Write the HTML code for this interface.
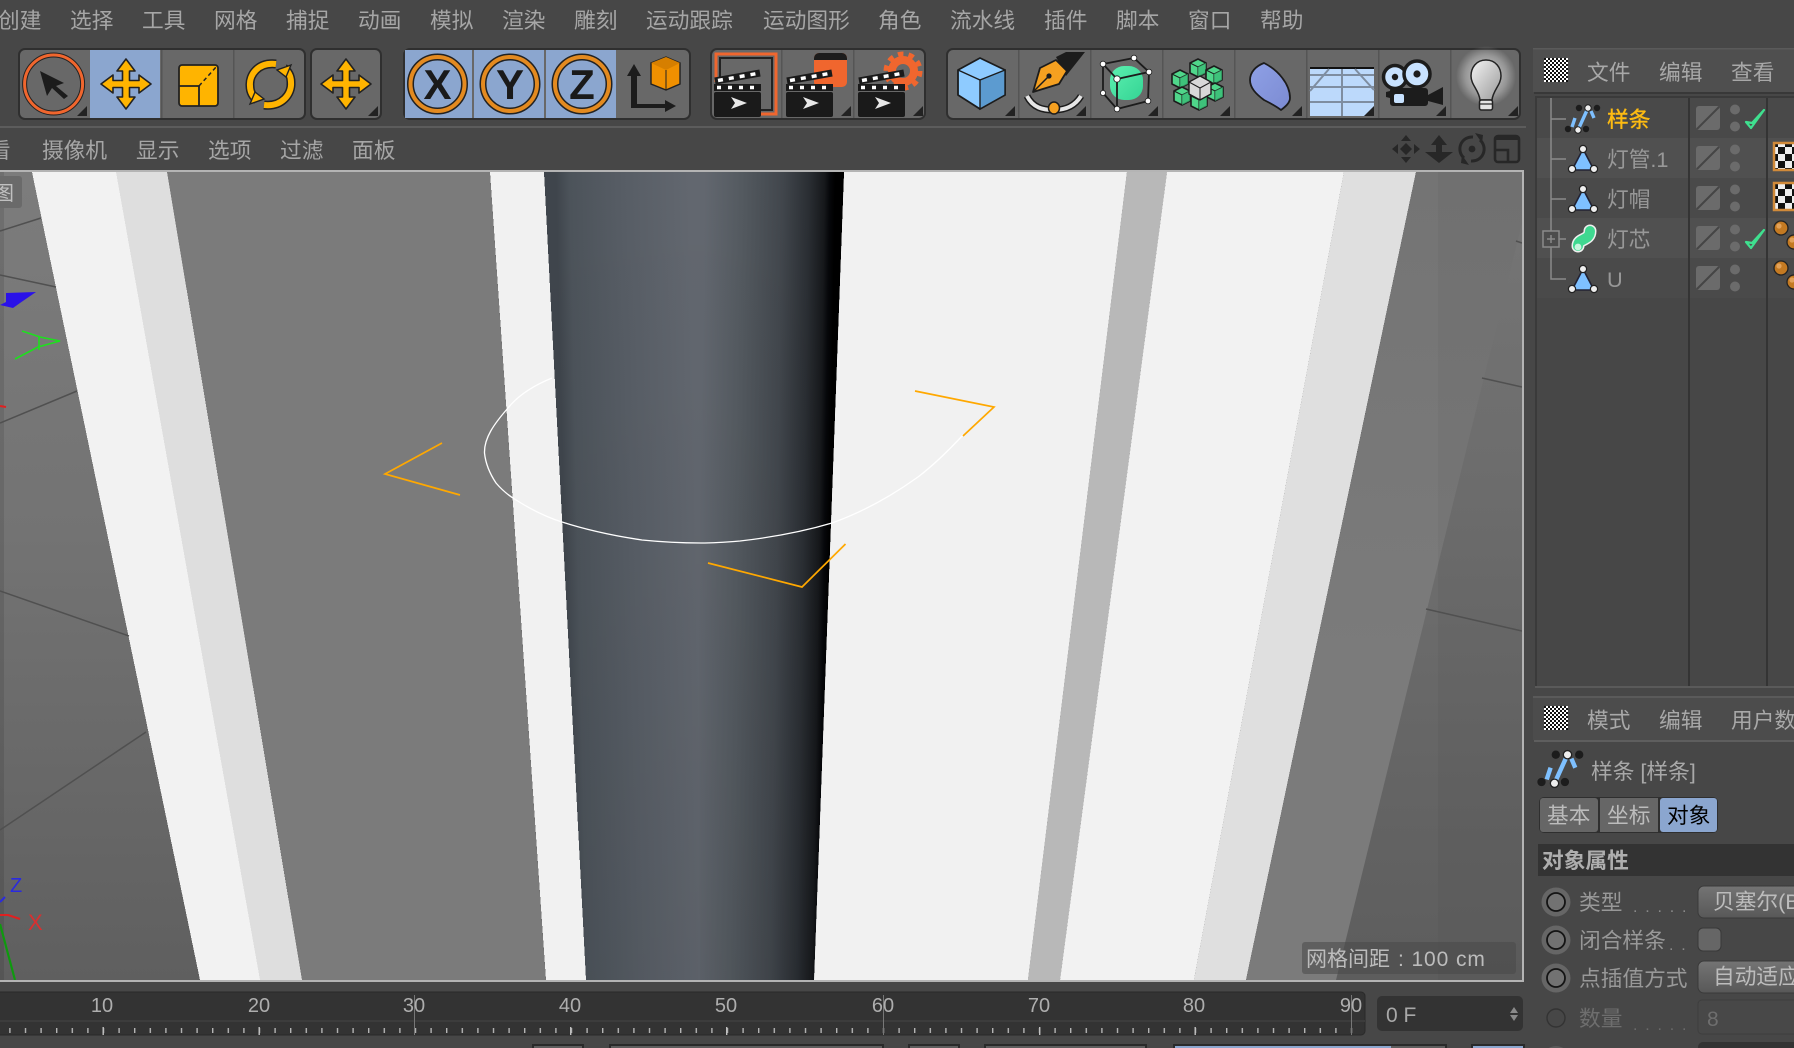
<!DOCTYPE html>
<html lang="zh">
<head>
<meta charset="utf-8">
<title>Cinema 4D</title>
<style>
html,body{margin:0;padding:0;background:#474747;width:1794px;height:1048px;overflow:hidden}
svg{display:block}
text{font-family:"Liberation Sans","Noto Sans CJK SC",sans-serif}
.m{font-size:21.7px;fill:#a6a6a6}
.n{font-size:20px;fill:#aeaeae;text-anchor:middle}
.o{font-size:21.7px;fill:#989898}
.p{font-size:21.7px;fill:#a8a8a8}
.xyz{font-size:42px;font-weight:bold;fill:#1a1a1a;text-anchor:middle}
</style>
</head>
<body>
<svg width="1794" height="1048" viewBox="0 0 1794 1048" xmlns="http://www.w3.org/2000/svg">
<defs>
  <clipPath id="vp"><rect x="0" y="172" width="1522" height="808"/></clipPath>
  <clipPath id="rp"><rect x="1533" y="0" width="261" height="1048"/></clipPath>
  <linearGradient id="bgL" x1="0" y1="172" x2="0" y2="980" gradientUnits="userSpaceOnUse">
    <stop offset="0" stop-color="#7c7c7c"/><stop offset=".45" stop-color="#737373"/><stop offset="1" stop-color="#5f5f5f"/>
  </linearGradient>
  <linearGradient id="bgM" x1="0" y1="172" x2="0" y2="980" gradientUnits="userSpaceOnUse">
    <stop offset="0" stop-color="#747474"/><stop offset=".6" stop-color="#7b7b7b"/><stop offset="1" stop-color="#7b7b7b"/>
  </linearGradient>
  <linearGradient id="bgR" x1="0" y1="172" x2="0" y2="980" gradientUnits="userSpaceOnUse">
    <stop offset="0" stop-color="#7a7a7a"/><stop offset=".4" stop-color="#707070"/><stop offset=".7" stop-color="#666"/><stop offset="1" stop-color="#5d5d5d"/>
  </linearGradient>
  <linearGradient id="tl" x1="565" y1="576" x2="698.5" y2="573" gradientUnits="userSpaceOnUse">
    <stop offset="0" stop-color="#3f454c"/><stop offset=".1" stop-color="#4c535a"/><stop offset=".5" stop-color="#575d65"/><stop offset="1" stop-color="#62676f"/>
  </linearGradient>
  <linearGradient id="tr" x1="698.5" y1="576" x2="829" y2="578" gradientUnits="userSpaceOnUse">
    <stop offset="0" stop-color="#62676f"/><stop offset=".3" stop-color="#53595f"/><stop offset=".6" stop-color="#41464c"/><stop offset=".8" stop-color="#2a2e33"/><stop offset=".92" stop-color="#16181b"/><stop offset=".96" stop-color="#06070a"/><stop offset="1" stop-color="#000"/>
  </linearGradient>
  <linearGradient id="fade" x1="0" y1="172" x2="0" y2="980" gradientUnits="userSpaceOnUse">
    <stop offset="0" stop-color="#000" stop-opacity="0"/><stop offset="1" stop-color="#000" stop-opacity=".05"/>
  </linearGradient>
  <linearGradient id="dd" x1="0" y1="0" x2="0" y2="1">
    <stop offset="0" stop-color="#747474"/><stop offset="1" stop-color="#585858"/>
  </linearGradient>
  <radialGradient id="glow"><stop offset="0" stop-color="#fff" stop-opacity=".75"/><stop offset=".7" stop-color="#fff" stop-opacity=".3"/><stop offset="1" stop-color="#fff" stop-opacity="0"/></radialGradient>
  <linearGradient id="bulb" x1="0" y1="0" x2="1" y2="1"><stop offset="0" stop-color="#f4f4f4"/><stop offset="1" stop-color="#999"/></linearGradient>
  <linearGradient id="blob" x1="0" y1="0" x2="1" y2="1"><stop offset="0" stop-color="#5cf0b0"/><stop offset="1" stop-color="#34d494"/></linearGradient>
  <linearGradient id="bend" x1="0" y1="0" x2="1" y2="1"><stop offset="0" stop-color="#8ea0e6"/><stop offset="1" stop-color="#7c8bd2"/></linearGradient>
  <pattern id="dith" width="4" height="4" patternUnits="userSpaceOnUse"><rect width="4" height="4" fill="#111"/><rect width="2" height="2" fill="#fff"/><rect x="2" y="2" width="2" height="2" fill="#fff"/></pattern>
  <pattern id="tick" x="9.2" y="0" width="15.6" height="60" patternUnits="userSpaceOnUse"><rect width="1.4" height="60" fill="#b4b4b4"/></pattern>
  <pattern id="chk" width="14" height="14" patternUnits="userSpaceOnUse"><rect width="14" height="14" fill="#eee"/><rect x="7" width="7" height="7" fill="#111"/><rect y="7" width="7" height="7" fill="#111"/></pattern>
  <path id="mv" d="M0,-25 L9,-13 L3.5,-13 L3.5,-3.5 L13,-3.5 L13,-9 L25,0 L13,9 L13,3.5 L3.5,3.5 L3.5,13 L9,13 L0,25 L-9,13 L-3.5,13 L-3.5,3.5 L-13,3.5 L-13,9 L-25,0 L-13,-9 L-13,-3.5 L-3.5,-3.5 L-3.5,-13 L-9,-13 Z" fill="#ffb400" stroke="#222" stroke-width="1.6" stroke-linejoin="round"/>
  <g id="clap">
    <rect x="0" y="30" width="47" height="25" rx="2" fill="#1a1a1a"/>
    <rect x="0" y="22" width="47" height="7" fill="#1a1a1a"/>
    <line x1="3" y1="25.5" x2="46" y2="25.5" stroke="#fff" stroke-width="3.5" stroke-dasharray="4 7"/>
    <line x1="1" y1="19" x2="46" y2="11" stroke="#1a1a1a" stroke-width="7"/>
    <line x1="4" y1="18.5" x2="46" y2="11" stroke="#fff" stroke-width="3.5" stroke-dasharray="5 6"/>
    <path d="M17,35 L33,41 L17,47 L21,41 Z" fill="#e8e8e8"/>
  </g>
  <path id="cor" d="M0,0 L-10,0 L0,-10 Z" fill="#222"/>
  <g id="triI">
    <path d="M0,-18 L-11,3 L11,3 Z" transform="translate(0,8)" fill="#7ec0ff" stroke="#223" stroke-width="1.6" stroke-linejoin="round"/>
    <g fill="#eee" stroke="#222" stroke-width="1.2"><circle cx="0" cy="-10" r="3.6"/><circle cx="-11" cy="10" r="3.6"/><circle cx="11" cy="10" r="3.6"/></g>
  </g>
  <g id="splI">
    <g stroke="#7ec0ff" stroke-width="3.4"><line x1="-8" y1="-1" x2="-11" y2="8"/><line x1="-5" y1="11" x2="5" y2="-11"/><line x1="8" y1="-8" x2="11" y2="-1"/></g>
    <g fill="#1c1c1c"><circle cx="-4" cy="-11" r="3.2"/><circle cx="14" cy="-11" r="3.2"/><circle cx="-15" cy="10" r="3.2"/><circle cx="3" cy="10" r="3.2"/></g>
    <g fill="#eee" stroke="#222" stroke-width="1"><circle cx="5" cy="-11" r="3.2"/><circle cx="-5" cy="11" r="3.2"/></g>
  </g>
  <g id="rowc">
    <rect x="0" y="-12" width="24" height="24" rx="3" fill="#6b6b6b"/>
    <line x1="1" y1="11" x2="23" y2="-11" stroke="#454545" stroke-width="2"/>
    <circle cx="39" cy="-8.5" r="5" fill="#6b6b6b"/><circle cx="39" cy="8.5" r="5" fill="#6b6b6b"/>
  </g>
  <path id="chkm" d="M0,3 L5,9 L18,-9 L6,4 Z" fill="none" stroke="#3fe08f" stroke-width="2.2" stroke-linejoin="round"/>
  <g id="radio"><circle r="14.5" fill="#666"/><circle r="9" fill="#727272" stroke="#141414" stroke-width="1.8"/></g>
  <g id="cube">
    <path d="M0,-9 L8,-5 L8,5 L0,9 L-8,5 L-8,-5 Z" fill="#4fd68a" stroke="#1c1c1c" stroke-width="1.6" stroke-linejoin="round"/>
    <path d="M-8,-5 L0,-1 L8,-5 M0,-1 V9" fill="none" stroke="#1c1c1c" stroke-width="1"/>
    <path d="M0,-1 L8,-5 L8,5 L0,9 Z" fill="#37b873" opacity=".7"/>
  </g>
  <g id="ball"><circle cx="0" cy="0" r="7" fill="#c47a22" stroke="#222" stroke-width="1.3"/><circle cx="-2" cy="-2" r="2.6" fill="#e2a25a"/></g>
</defs>

<rect width="1794" height="1048" fill="#474747"/>

<!-- menu -->
<text class="m" x="-2" y="28">创建</text><text class="m" x="70" y="28">选择</text><text class="m" x="142" y="28">工具</text><text class="m" x="214" y="28">网格</text><text class="m" x="286" y="28">捕捉</text><text class="m" x="358" y="28">动画</text><text class="m" x="430" y="28">模拟</text><text class="m" x="502" y="28">渲染</text><text class="m" x="574" y="28">雕刻</text><text class="m" x="646" y="28">运动跟踪</text><text class="m" x="763" y="28">运动图形</text><text class="m" x="878" y="28">角色</text><text class="m" x="950" y="28">流水线</text><text class="m" x="1044" y="28">插件</text><text class="m" x="1116" y="28">脚本</text><text class="m" x="1188" y="28">窗口</text><text class="m" x="1260" y="28">帮助</text>

<!-- toolbar groups -->
<g fill="#686868" stroke="#2f2f2f" stroke-width="2">
  <rect x="19" y="49" width="286" height="70" rx="6"/>
  <rect x="311" y="49" width="70" height="70" rx="6"/>
  <rect x="404" y="49" width="286" height="70" rx="6"/>
  <rect x="711" y="49" width="214" height="70" rx="6"/>
  <rect x="947" y="49" width="573" height="70" rx="6"/>
</g>
<rect x="90" y="50" width="70" height="68" fill="#8ba6cf"/>
<rect x="405" y="50" width="67" height="68" fill="#8ba6cf"/>
<rect x="474" y="50" width="70" height="68" fill="#8ba6cf"/>
<rect x="546" y="50" width="70" height="68" fill="#8ba6cf"/>
<g fill="#555">
  <rect x="161" y="50" width="1.5" height="68"/><rect x="233" y="50" width="1.5" height="68"/>
  <rect x="781" y="50" width="1.5" height="68"/><rect x="853" y="50" width="1.5" height="68"/>
  <rect x="1018" y="50" width="1.5" height="68"/><rect x="1090" y="50" width="1.5" height="68"/><rect x="1162" y="50" width="1.5" height="68"/><rect x="1234" y="50" width="1.5" height="68"/><rect x="1306" y="50" width="1.5" height="68"/><rect x="1378" y="50" width="1.5" height="68"/><rect x="1450" y="50" width="1.5" height="68"/>
</g>

<!-- select -->
<circle cx="53.6" cy="84" r="29" fill="none" stroke="#222" stroke-width="5"/>
<circle cx="53.6" cy="84" r="29" fill="none" stroke="#f0662e" stroke-width="3"/>
<path d="M40,71 L64,83 L56,86 L68,96 L64,99 L52,88 L47,96 Z" fill="#1c1c1c"/>
<use href="#mv" x="126" y="84"/>
<!-- scale -->
<rect x="179" y="65" width="39" height="41" rx="3" fill="#ffb400" stroke="#222" stroke-width="1.8"/>
<path d="M179,86 H199 V106" fill="none" stroke="#222" stroke-width="1.8"/>
<path d="M199,86 L217,66" stroke="#222" stroke-width="1.5" stroke-dasharray="4 3"/>
<!-- rotate -->
<g fill="none" stroke-linecap="butt">
  <path d="M276,64 C258,62 249,75 250,86 C250,92 253,97 257,100" stroke="#222" stroke-width="9"/>
  <path d="M264,105 C282,107 292,94 291,82 C291,76 288,71 284,68" stroke="#222" stroke-width="9"/>
  <path d="M276,64 C258,62 249,75 250,86 C250,92 253,97 257,100" stroke="#ffb400" stroke-width="6"/>
  <path d="M264,105 C282,107 292,94 291,82 C291,76 288,71 284,68" stroke="#ffb400" stroke-width="6"/>
</g>
<path d="M250,104 L264,99 L255,92 Z M291,65 L277,70 L286,77 Z" fill="#ffb400" stroke="#222" stroke-width="1.4"/>
<use href="#mv" x="346" y="84"/>
<use href="#cor" x="87" y="116"/><use href="#cor" x="378" y="116"/>

<!-- XYZ -->
<g fill="none">
  <g stroke="#222" stroke-width="7"><circle cx="437.5" cy="84" r="27"/><circle cx="510" cy="84" r="27"/><circle cx="582" cy="84" r="27"/></g>
  <g stroke="#e38a20" stroke-width="4"><circle cx="437.5" cy="84" r="27"/><circle cx="510" cy="84" r="27"/><circle cx="582" cy="84" r="27"/></g>
</g>
<text class="xyz" x="437.5" y="99">X</text><text class="xyz" x="510" y="99">Y</text><text class="xyz" x="582" y="99">Z</text>
<!-- axis -->
<path d="M634,64 L641,76 L637,76 L637,104 L665,104 L665,100 L676,106 L665,112 L665,108 L631,108 L631,76 L627,76 Z" fill="#1c1c1c"/>
<path d="M666,57 L680,63 L680,84 L666,90 L651,84 L651,63 Z" fill="#f09000" stroke="#222" stroke-width="1.4"/>
<path d="M651,63 L666,57 L680,63 L666,70 Z" fill="#d67f00"/>
<path d="M666,70 V90" stroke="#222" stroke-width="1"/>

<!-- clappers -->
<path d="M716,82 V54 H776 V114 H761" fill="none" stroke="#f0662e" stroke-width="3"/>
<path d="M720,78 V58 H772 V110 H761" fill="none" stroke="#222" stroke-width="2"/>
<use href="#clap" x="714" y="62"/>
<rect x="814" y="53" width="33" height="34" rx="5" fill="#f0662e"/>
<path d="M814,60 V58 a5,5 0 0 1 5,-5 H842 a5,5 0 0 1 5,5 V60 Z" fill="#1c1c1c"/>
<use href="#clap" x="786" y="62"/>
<circle cx="903" cy="71" r="17" fill="none" stroke="#f0662e" stroke-width="5" stroke-dasharray="5.5 5.2"/>
<circle cx="903" cy="71" r="11" fill="none" stroke="#f0662e" stroke-width="8"/>
<use href="#clap" x="858" y="62"/>
<use href="#cor" x="851" y="116"/><use href="#cor" x="923" y="116"/>

<!-- cube -->
<path d="M980,58 L1005,70 L1005,95 L980,109 L958,95 L958,70 Z" fill="#8ecbff" stroke="#1c1c1c" stroke-width="1.8" stroke-linejoin="round"/>
<path d="M980,80 L1005,70 L1005,95 L980,109 Z" fill="#5c9bd0" stroke="#1c1c1c" stroke-width="1.4"/>
<path d="M958,70 L980,80" stroke="#1c1c1c" stroke-width="1.4"/>
<!-- pen -->
<path d="M1056,57 L1066,52 L1085,52 L1066,76 Z" fill="#1c1c1c"/>
<path d="M1033,92 L1040,68 L1056,60 L1067,71 L1059,84 Z" fill="#f5a020" stroke="#1c1c1c" stroke-width="1.8" stroke-linejoin="round"/>
<path d="M1034,91 L1048,77" stroke="#1c1c1c" stroke-width="1.5"/><circle cx="1049" cy="76" r="2.6" fill="#1c1c1c"/>
<path d="M1027,96 C1033,108 1043,110 1054,110 C1066,110 1075,106 1081,96" fill="none" stroke="#1c1c1c" stroke-width="7"/>
<path d="M1027,96 C1033,108 1043,110 1054,110 C1066,110 1075,106 1081,96" fill="none" stroke="#e6e6e6" stroke-width="4"/>
<ellipse cx="1054" cy="108" rx="5.5" ry="6" fill="#f5a020" stroke="#1c1c1c" stroke-width="1.5"/>
<!-- cage -->
<rect x="1110" y="66" width="33" height="34" rx="14" fill="url(#blob)"/>
<g fill="none" stroke="#1c1c1c" stroke-width="1.8"><path d="M1103,64 L1134,58 L1149,72 L1148,101 L1117,109 L1103,93 Z"/><path d="M1103,64 L1117,79 L1149,72 M1117,79 V109"/></g>
<g fill="#fff" stroke="#1c1c1c" stroke-width=".8"><circle cx="1103" cy="64" r="2.8"/><circle cx="1134" cy="58" r="2.8"/><circle cx="1149" cy="72" r="2.8"/><circle cx="1117" cy="79" r="3.2"/><circle cx="1103" cy="93" r="2.6"/><circle cx="1148" cy="101" r="2.8"/><circle cx="1117" cy="109" r="2.8"/></g>
<!-- cloner -->
<use href="#cube" x="1198" y="68"/><use href="#cube" x="1214" y="75"/><use href="#cube" x="1180" y="79"/><use href="#cube" x="1215" y="92"/><use href="#cube" x="1182" y="96"/><use href="#cube" x="1199" y="101"/>
<path d="M1200,76 L1211,82 L1211,94 L1200,100 L1189,94 L1189,82 Z" fill="#d8d8d8" stroke="#1c1c1c" stroke-width="1.4"/><path d="M1189,82 L1200,88 L1211,82 M1200,88 V100" fill="none" stroke="#1c1c1c" stroke-width="1"/>
<!-- bend -->
<path d="M1250,80 C1250,72 1256,66 1264,63 C1278,70 1290,84 1290,98 C1290,103 1285,107 1281,110 C1276,106 1270,103 1264,100 C1256,94 1250,88 1250,80 Z" fill="url(#bend)" stroke="#1c1c1c" stroke-width="1.8" stroke-linejoin="round"/>
<!-- floor -->
<rect x="1310" y="68" width="64" height="48" fill="#bcd9fb"/>
<rect x="1310" y="67" width="64" height="2" fill="#111"/>
<g stroke="#7e8da0" stroke-width="2" fill="none"><path d="M1310,75 H1374 M1310,87 H1374 M1310,102 H1374 M1342,69 V116 M1329,69 L1310,91 M1355,69 L1374,90"/></g>
<!-- camera -->
<circle cx="1395" cy="77" r="11.5" fill="#c8e2ff" stroke="#1c1c1c" stroke-width="3.5"/><circle cx="1395" cy="77" r="3.2" fill="#1c1c1c"/>
<circle cx="1417" cy="74" r="13" fill="#c8e2ff" stroke="#1c1c1c" stroke-width="3.5"/><circle cx="1417" cy="74" r="3.6" fill="#1c1c1c"/>
<path d="M1394,88 H1425 a3,3 0 0 1 3,3 V103 a3,3 0 0 1 -3,3 H1393 a3,3 0 0 1 -3,-3 V98 L1386,97 V92 L1390,91 a3,3 0 0 1 4,-3 Z M1428,95 L1443,87 V105 L1428,101 Z" fill="#1c1c1c"/>
<rect x="1394" y="94" width="10" height="9" rx="2" fill="#c8e2ff"/>
<!-- bulb -->
<circle cx="1486" cy="76" r="30" fill="url(#glow)"/>
<path d="M1486,60 C1476,60 1471,68 1471,76 C1471,85 1479,90 1480,100 L1492,100 C1493,90 1501,85 1501,76 C1501,68 1496,60 1486,60Z" fill="url(#bulb)" stroke="#222" stroke-width="1.5"/>
<rect x="1479.5" y="100" width="13" height="10" rx="2" fill="#e4e4e4" stroke="#222" stroke-width="1.5"/><path d="M1480,104 H1492" stroke="#222" stroke-width="1.2"/>
<use href="#cor" x="1015" y="116"/><use href="#cor" x="1086" y="116"/><use href="#cor" x="1158" y="116"/><use href="#cor" x="1230" y="116"/><use href="#cor" x="1302" y="116"/><use href="#cor" x="1374" y="116"/><use href="#cor" x="1446" y="116"/><use href="#cor" x="1518" y="116"/>

<!-- second menu -->
<rect x="0" y="126" width="1526" height="2" fill="#5c5c5c"/>
<text class="m" x="-11" y="158">看</text><text class="m" x="42" y="158">摄像机</text><text class="m" x="136" y="158">显示</text><text class="m" x="208" y="158">选项</text><text class="m" x="280" y="158">过滤</text><text class="m" x="352" y="158">面板</text>
<path d="M1406,135 L1411,141 H1401 Z M1406,163 L1411,157 H1401 Z M1392,149 L1398,144 V154 Z M1420,149 L1414,144 V154 Z M1406,143 L1412,149 L1406,155 L1400,149 Z" fill="#272727"/>
<path d="M1439,135 L1447,145 H1442 V152 H1453 L1439,163 L1425,152 H1436 V145 H1431 Z" fill="#272727"/>
<g fill="none" stroke="#272727" stroke-width="3"><path d="M1473,137 A12,12 0 0 0 1464,158"/><path d="M1471,161 A12,12 0 0 0 1480,140"/></g>
<path d="M1475,133 L1483,135 L1482,143 Z M1469,165 L1461,163 L1462,155 Z" fill="#272727"/><circle cx="1472" cy="149" r="3.4" fill="#272727"/>
<g fill="none" stroke="#272727" stroke-width="2.6"><rect x="1495" y="136" width="24" height="26" rx="3"/><path d="M1508,162 V150 H1495"/></g><rect x="1495" y="136" width="24" height="4" fill="#272727"/>

<!-- viewport -->
<rect x="0" y="170" width="1524" height="2" fill="#b4b4b4"/>
<rect x="1522" y="170" width="2" height="812" fill="#b4b4b4"/>
<rect x="0" y="980" width="1524" height="2" fill="#b4b4b4"/>
<g clip-path="url(#vp)">
  <rect x="0" y="172" width="300" height="808" fill="url(#bgL)"/>
  <rect x="0" y="172" width="4" height="808" fill="#000" opacity=".1"/>
  <polygon points="167,172 490,172 546,980 302,980" fill="#7b7b7b"/>
  <polygon points="32,172 116,172 260,980 200,980" fill="#f2f2f2" shape-rendering="crispEdges"/>
  <polygon points="116,172 167,172 302,980 260,980" fill="#dedede" shape-rendering="crispEdges"/>
  <polygon points="490,172 544,172 586,980 546,980" fill="#f1f1f1" shape-rendering="crispEdges"/>
  <polygon points="844,172 1127,172 1028,980 814,980" fill="#f1f1f1"/>
  <polygon points="1127,172 1167,172 1060,980 1028,980" fill="#b8b8b8" shape-rendering="crispEdges"/>
  <polygon points="1167,172 1344,172 1194,980 1060,980" fill="#f2f2f2"/>
  <polygon points="1344,172 1416,172 1246,980 1194,980" fill="#dfdfdf" shape-rendering="crispEdges"/>
  <polygon points="1416,172 1522,172 1522,980 1246,980" fill="url(#bgM)"/>
  <polygon points="1522,223 1522,980 1336,980 1346,939" fill="url(#bgR)"/>
  <rect x="1438" y="172" width="84" height="808" fill="#000" opacity=".03"/>
  <polygon points="544,172 697,172 700,980 586,980" fill="url(#tl)" shape-rendering="crispEdges"/>
  <polygon points="697,172 844,172 814,980 700,980" fill="url(#tr)" shape-rendering="crispEdges"/>
  <polygon points="544,172 844,172 814,980 586,980" fill="url(#fade)"/>
  <g stroke="#505050" stroke-width="1.5" fill="none">
    <path d="M0,231 L41,218 M0,275 L56,287 M0,423 L77,391 M0,591 L129,636 M0,830 L146,732 M1516,241 L1522,243 M1482,378 L1522,387 M1426,609 L1522,631"/>
  </g>
  <!-- badge -->
  <rect x="-6" y="176" width="28" height="32" rx="3" fill="#6a6a6a"/>
  <text x="-6" y="200" font-size="20" fill="#c0c0c0">图</text>
  <!-- gizmo -->
  <polygon points="6,293 36,292 20,303 13,308 0,305 6,302" fill="#2a12e8"/>
  <path d="M22,331 L40,337 L60,341 L38,347 L15,359 M39,337 V350" fill="none" stroke="#1ee01e" stroke-width="1.6"/>
  <path d="M0,406 L6,407" stroke="#e02020" stroke-width="2"/>
  <path d="M0,915 L8,915 L20,919" stroke="#e02020" stroke-width="2" fill="none"/>
  <path d="M0,902 L5,897" stroke="#2a2ae0" stroke-width="2"/>
  <path d="M0,924 L15,980" stroke="#0e9a0e" stroke-width="2.2"/>
  <text x="10" y="892" font-size="20" fill="#2a2ae0">Z</text>
  <text x="28" y="930" font-size="22" fill="#d83030">X</text>
  <!-- spline circle -->
  <path d="M552,378 C530,387 516,398 508,408 C494,424 484,438 484.5,453 C486,467 492,477 496,483 C502,490 508,495 514.5,499 C530,509 546,517 562,522 C590,531 615,536 642,540 C662,542 682,543 701,543 C715,543 728,542 740,541 C775,537 805,531 832,523 C860,513 890,497 918,477 C935,464 950,449 963,435" fill="none" stroke="#fff" stroke-width="1.3"/>
  <g fill="none" stroke="#ffa800" stroke-width="1.7">
    <path d="M442,443 L385,474 L460,495"/>
    <path d="M915,391 L994,407 L963,436"/>
    <path d="M708,563 L802,587 L845.5,544"/>
  </g>
  <!-- grid label -->
  <rect x="1302" y="942" width="214" height="32" rx="3" fill="#484848" fill-opacity=".55"/>
  <text x="1306" y="966" font-size="21" fill="#bcbcbc">网格间距</text>
  <text x="1398" y="966" font-size="21" fill="#bcbcbc" letter-spacing=".9">: 100 cm</text>
</g>

<!-- timeline -->
<rect x="-4" y="992" width="1369" height="43" rx="4" fill="#333" stroke="#2a2a2a" stroke-width="1"/>
<rect x="0" y="1020" width="1365" height="2" fill="#3c3c3c"/>
<rect x="0" y="1028" width="1362" height="5" fill="url(#tick)"/>
<g fill="#c0c0c0"><rect x="102.5" y="1027" width="1.4" height="8"/><rect x="258.5" y="1027" width="1.4" height="8"/><rect x="570" y="1027" width="1.4" height="8"/><rect x="726" y="1027" width="1.4" height="8"/><rect x="1039" y="1027" width="1.4" height="8"/><rect x="1194.5" y="1027" width="1.4" height="8"/></g>
<g fill="#777"><rect x="414" y="995" width="1" height="40"/><rect x="883" y="995" width="1" height="40"/><rect x="1351" y="995" width="1" height="40"/></g>
<text class="n" x="102" y="1012">10</text><text class="n" x="259" y="1012">20</text><text class="n" x="414" y="1012">30</text><text class="n" x="570" y="1012">40</text><text class="n" x="726" y="1012">50</text><text class="n" x="883" y="1012">60</text><text class="n" x="1039" y="1012">70</text><text class="n" x="1194" y="1012">80</text><text class="n" x="1351" y="1012">90</text>
<rect x="1377" y="996" width="146" height="35" rx="5" fill="#333"/>
<text x="1386" y="1022" font-size="21" fill="#a8a8a8">0 F</text>
<path d="M1514,1007 L1518,1013 H1510 Z M1514,1021 L1518,1015 H1510 Z" fill="#8a8a8a"/>
<g stroke="#2a2a2a" stroke-width="2">
  <rect x="533" y="1045" width="50" height="10" fill="#5e5e5e"/>
  <rect x="610" y="1045" width="273" height="10" fill="#5e5e5e"/>
  <rect x="909" y="1045" width="50" height="10" fill="#5e5e5e"/>
  <rect x="985" y="1045" width="161" height="10" fill="#5e5e5e"/>
  <rect x="1174" y="1045" width="272" height="10" fill="#5e5e5e"/>
  <rect x="1472" y="1045" width="52" height="10" fill="#8ba6cf"/>
</g>
<rect x="1175" y="1046" width="216" height="4" fill="#8ba6cf"/>

<!-- right panel -->
<g clip-path="url(#rp)">
  <rect x="1533" y="48" width="261" height="1000" fill="#474747"/>
  <rect x="1533" y="48" width="261" height="44" fill="#4f4f4f"/>
  <rect x="1533" y="48" width="261" height="1.5" fill="#5a5a5a"/>
  <rect x="1534" y="92" width="260" height="2" fill="#383838"/>
  <rect x="1544" y="58" width="24" height="24" fill="url(#dith)"/>
  <text class="p" x="1587" y="80">文件</text><text class="p" x="1659" y="80">编辑</text><text class="p" x="1731" y="80">查看</text>
  <rect x="1535" y="96" width="259" height="2" fill="#3a3a3a"/>
  <rect x="1535" y="96" width="2" height="590" fill="#3a3a3a"/>
  <rect x="1537" y="98" width="257" height="40" fill="#494949"/>
  <rect x="1537" y="138" width="257" height="40" fill="#505050"/>
  <rect x="1537" y="178" width="257" height="40" fill="#4a4a4a"/>
  <rect x="1537" y="218" width="257" height="40" fill="#505050"/>
  <rect x="1537" y="258" width="257" height="40" fill="#4a4a4a"/>
  <rect x="1688" y="98" width="2" height="588" fill="#343434"/>
  <rect x="1766" y="98" width="2" height="588" fill="#343434"/>
  <g stroke="#8a8a8a" stroke-width="1.5" fill="none">
    <path d="M1551,98 V279 H1566 M1551,119 H1566 M1551,159 H1566 M1551,199 H1566 M1559,239 H1566"/>
    <rect x="1543" y="231" width="16" height="16" fill="#4c4c4c"/>
    <path d="M1547,239 H1555 M1551,235 V243"/>
  </g>
  <use href="#splI" x="1583" y="119"/>
  <use href="#triI" x="1583" y="159"/><use href="#triI" x="1583" y="199"/><use href="#triI" x="1583" y="279"/>
  <path d="M1578,246 C1578,238 1590,241 1590,231" fill="none" stroke="#f0f0f0" stroke-width="13" stroke-linecap="round"/>
  <path d="M1578,246 C1578,238 1590,241 1590,231" fill="none" stroke="#3fd890" stroke-width="10" stroke-linecap="round"/>
  <circle cx="1578" cy="247" r="3.4" fill="#c8f5de"/>
  <text x="1607" y="127" font-size="21.7" fill="#fdbb12" stroke="#fdbb12" stroke-width=".4">样条</text>
  <text class="o" x="1607" y="167">灯管.1</text><text class="o" x="1607" y="207">灯帽</text><text class="o" x="1607" y="247">灯芯</text><text class="o" x="1607" y="287">U</text>
  <use href="#rowc" x="1696" y="118"/><use href="#rowc" x="1696" y="158"/><use href="#rowc" x="1696" y="198"/><use href="#rowc" x="1696" y="238"/><use href="#rowc" x="1696" y="278"/>
  <use href="#chkm" x="1746" y="119"/><use href="#chkm" x="1746" y="239"/>
  <rect x="1774" y="143" width="30" height="27" fill="url(#chk)" stroke="#d08a3a" stroke-width="2.5"/>
  <rect x="1774" y="183" width="30" height="27" fill="url(#chk)" stroke="#d08a3a" stroke-width="2.5"/>
  <use href="#ball" x="1781" y="228"/><use href="#ball" x="1794" y="242"/>
  <use href="#ball" x="1781" y="268"/><use href="#ball" x="1794" y="282"/>

  <rect x="1535" y="686" width="259" height="2" fill="#5a5a5a"/>
  <rect x="1533" y="688" width="261" height="8" fill="#474747"/>
  <rect x="1533" y="696" width="261" height="44" fill="#4c4c4c"/>
  <rect x="1533" y="696" width="261" height="2" fill="#5a5a5a"/>
  <rect x="1534" y="740" width="260" height="2" fill="#5e5e5e"/>
  <rect x="1544" y="706" width="24" height="24" fill="url(#dith)"/>
  <text class="p" x="1587" y="728">模式</text><text class="p" x="1659" y="728">编辑</text><text class="p" x="1731" y="728">用户数据</text>
  <use href="#splI" transform="translate(1561,769) scale(1.3)"/>
  <text x="1591" y="779" font-size="21.7" fill="#a8a8a8">样条 [样条]</text>
  <rect x="1539" y="797" width="179" height="36" rx="5" fill="#2f2f2f"/>
  <rect x="1540" y="798" width="58" height="34" rx="3" fill="#666"/>
  <rect x="1600" y="798" width="58" height="34" fill="#666"/>
  <rect x="1660" y="798" width="57" height="34" rx="3" fill="#8ba6cf"/>
  <text x="1547" y="823" font-size="21.7" fill="#bcbcbc">基本</text><text x="1607" y="823" font-size="21.7" fill="#bcbcbc">坐标</text><text x="1667" y="823" font-size="21.7" fill="#000">对象</text>
  <rect x="1538" y="844" width="256" height="32" fill="#333"/>
  <text x="1542" y="868" font-size="21.7" font-weight="bold" fill="#aeaeae">对象属性</text>
  <use href="#radio" x="1556" y="902"/><use href="#radio" x="1556" y="940"/><use href="#radio" x="1556" y="978"/>
  <circle cx="1556" cy="1018" r="9" fill="none" stroke="#333" stroke-width="1.4"/>
  <text class="o" x="1579" y="910">类型</text><text class="o" x="1579" y="948">闭合样条</text><text class="o" x="1579" y="986">点插值方式</text>
  <text x="1579" y="1026" font-size="21.7" fill="#6e6e6e">数量</text>
  <text x="1633" y="912" font-size="16" fill="#8a8a8a" letter-spacing="7.8">.....</text>
  <text x="1669" y="950" font-size="16" fill="#8a8a8a" letter-spacing="7.8">..</text>
  <text x="1633" y="1030" font-size="16" fill="#6a6a6a" letter-spacing="7.8">.....</text>
  <rect x="1698" y="886" width="120" height="32" rx="6" fill="url(#dd)" stroke="#3a3a3a"/>
  <text x="1713" y="909" font-size="21.7" fill="#bcbcbc">贝塞尔(Bézier)</text>
  <rect x="1698" y="928" width="23" height="23" rx="5" fill="#666" stroke="#383838"/>
  <rect x="1698" y="961" width="120" height="32" rx="6" fill="url(#dd)" stroke="#3a3a3a"/>
  <text x="1713" y="984" font-size="21.7" fill="#bcbcbc">自动适应</text>
  <rect x="1698" y="1000" width="120" height="34" rx="4" fill="#484848" stroke="#3e3e3e"/>
  <text x="1707" y="1026" font-size="21" fill="#6e6e6e">8</text>
  <rect x="1698" y="1042" width="120" height="20" rx="5" fill="#333"/>
  <circle cx="1556" cy="1060" r="14" fill="#5a5a5a"/>
</g>
</svg>
</body>
</html>
